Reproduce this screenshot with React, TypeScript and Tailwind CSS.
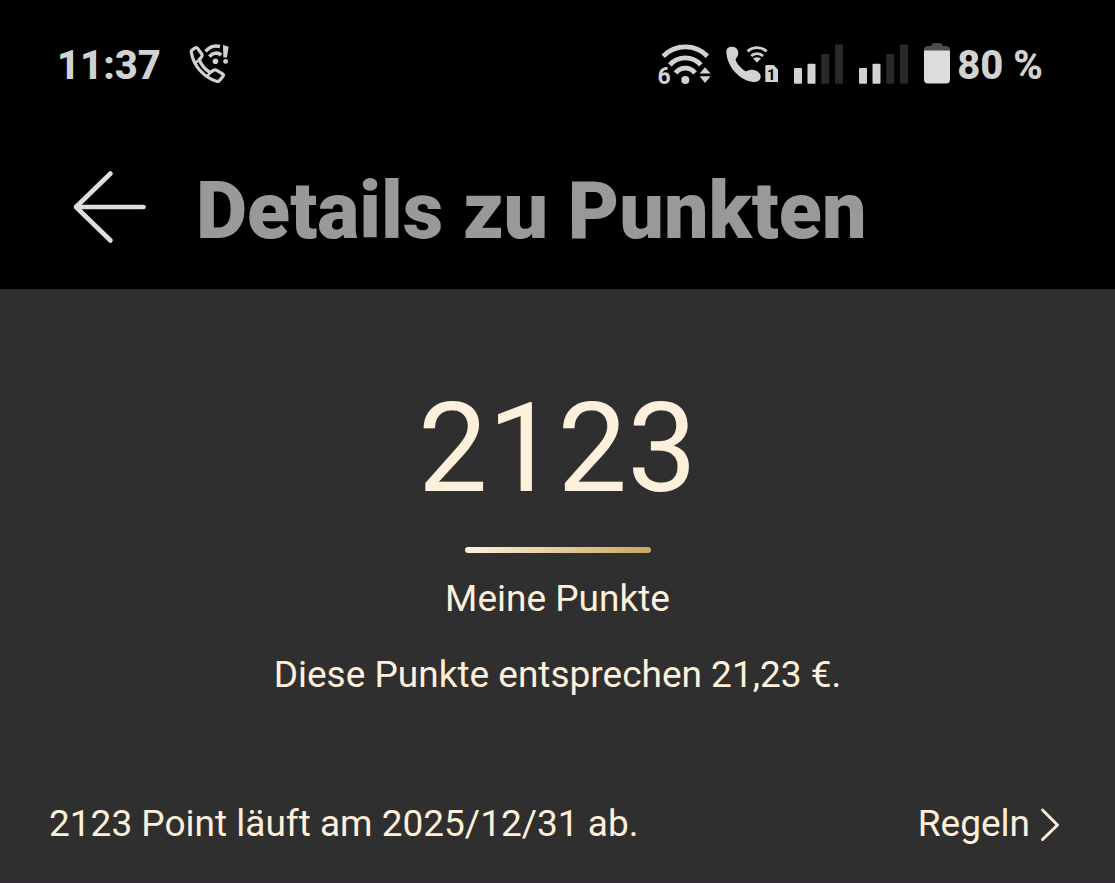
import React from 'react';

function CallWifiAlertIcon() {
  return (
    <svg width="40" height="40" viewBox="0 0 40 40" fill="none" stroke="currentColor" strokeLinecap="round" strokeLinejoin="round" aria-hidden="true">
      <path
        d="M2.3 8.2C2 7 2.6 6.2 3.6 5.6L6.2 3.9C7.2 3.3 8 3.5 8.6 4.4L12.9 10.2C13.5 11 13.5 11.8 12.9 12.5L10.2 15.6C12 20.5 16.5 25.5 21 28.6L24.8 26.2C25.7 25.6 26.5 25.6 27.3 26.2L33.6 29.8C34.6 30.4 34.8 31.3 34 32.2L30.6 36.4C29.8 37.4 28.8 37.7 27.6 37.3C15 33.5 4.5 22 2.3 8.2Z"
        strokeWidth="3.2"
      />
      <path d="M10.4 15.8L7.4 18M21 28.8L19 31.4" strokeWidth="2.6" />
      <path d="M16.6 7.4C20.6 2.6 26 1.2 31 2.6M20.4 12.6C23.5 8.6 28.6 8 32.2 11" strokeWidth="3.6" strokeLinecap="butt" />
      <circle cx="26.4" cy="17.2" r="2.8" fill="currentColor" stroke="none" />
      <path d="M34 1L39.6 2.8L38 13.4H34.4Z" fill="currentColor" stroke="none" />
      <circle cx="36.6" cy="17.4" r="2.4" fill="currentColor" stroke="none" />
    </svg>
  );
}

function WifiSixIcon() {
  return (
    <svg width="54" height="52" viewBox="-2 -4 54 52" fill="none" stroke="currentColor" strokeWidth="4.8" aria-hidden="true">
      <path d="M4.2 14.2A31 31 0 0 1 48.4 14.2" />
      <path d="M10.8 22.8A21 21 0 0 1 41.8 22.8" />
      <path d="M16.6 31A12 12 0 0 1 36 31" />
      <circle cx="26.3" cy="38" r="4" fill="currentColor" stroke="none" />
      <path d="M40.6 31.6L46 25.3L51.6 31.6ZM40.6 34.2L46 41L51.6 34.2Z" fill="currentColor" stroke="none" />
      <text x="-1.5" y="42" fontSize="23" fontWeight="700" fill="currentColor" stroke="none">6</text>
    </svg>
  );
}

function WifiCallIcon() {
  return (
    <svg width="53" height="40" viewBox="0 0 53 40" fill="none" stroke="currentColor" strokeWidth="2.8" aria-hidden="true">
      <path
        d="M0.3 8C0.3 4 3 2.7 6 2.7C10.5 2.7 12.3 6 12.3 9.3C12.3 12.3 10.4 13.5 9.5 15.5C10.5 19.5 15.5 25 19.5 27.3C21.5 26.8 23 25.5 26 25.7C31 26 34.7 29 34.7 32.5C34.7 36.5 31 38.3 27 38C14 36.5 1 23 0.3 8Z"
        fill="currentColor"
        stroke="none"
      />
      <path d="M21.6 7.4A14 14 0 0 1 40.6 7.4M25.2 12A8.4 8.4 0 0 1 37 12" />
      <path d="M27 14.6Q31 11.8 35 14.6L31 18.6Z" fill="currentColor" stroke="none" />
      <path d="M39.3 22.3A1.3 1.3 0 0 1 40.6 21H47.6L52 25.4V38H39.3Z" fill="currentColor" stroke="none" />
      <text x="41" y="35.5" fontSize="15" fontWeight="700" fill="#000" stroke="none">1</text>
    </svg>
  );
}

function SignalIcon() {
  return (
    <svg width="50" height="40" viewBox="0 0 50 40" fill="currentColor" aria-hidden="true">
      <rect x="0" y="24" width="8" height="15.7" rx="1" />
      <rect x="13.5" y="19.7" width="8" height="20" rx="1" />
      <rect x="27.2" y="10" width="8" height="29.7" rx="1" fill="#292929" />
      <rect x="41" y="0.4" width="8" height="39.3" rx="1" fill="#292929" />
    </svg>
  );
}

function BatteryIcon() {
  return (
    <svg width="26" height="44" viewBox="0 0 26 44" aria-hidden="true">
      <path d="M0 9V7.5Q0 4 4 4H7Q8 1 11 1H15Q18 1 19 4H22Q26 4 26 7.5V9Z" fill="#4d4d4d" />
      <path d="M0 8.4H26V37.5Q26 41.5 22 41.5H4Q0 41.5 0 37.5Z" fill="#dcdcdc" />
    </svg>
  );
}

function StatusBar() {
  return (
    <div className="flex h-[125px] items-center justify-between pt-0.5 pr-[72px] pl-[57px] text-[40px] leading-none font-extrabold text-[#d2d2d2]">
      <div className="flex items-center gap-7">
        <span className="pt-1">11:37</span>
        <CallWifiAlertIcon />
      </div>
      <div className="flex items-center gap-[15px]">
        <WifiSixIcon />
        <WifiCallIcon />
        <SignalIcon />
        <SignalIcon />
        <div className="flex items-center gap-[7px]">
          <BatteryIcon />
          <span className="pt-1">80 %</span>
        </div>
      </div>
    </div>
  );
}

function Header() {
  return (
    <header className="flex h-[164px] items-center gap-12 px-[72px]">
      <button type="button" aria-label="Zurück" className="text-[#dedede]">
        <svg width="76" height="76" viewBox="0 0 76 76" fill="none" stroke="currentColor" strokeWidth="4.6" strokeLinecap="round" strokeLinejoin="round" aria-hidden="true">
          <path d="M38.5 4.5L4 38L38.5 71.5M4 38H71.5" />
        </svg>
      </button>
      <h1 className="pt-2 text-[79px] leading-none font-black text-[#999999]">Details zu Punkten</h1>
    </header>
  );
}

export default function App() {
  return (
    <div className="flex min-h-screen flex-col bg-black font-[Roboto,sans-serif]">
      <StatusBar />
      <Header />
      <main className="flex grow flex-col border-b border-[#332b33] bg-[#2f2f2f] text-[37px] leading-[44px] text-[#fff0dc]">
        <section className="flex flex-col items-center pt-[98px]">
          <p className="text-[124px] leading-[124px]">2123</p>
          <div className="mt-9 h-[6px] w-[186px] rounded-full bg-linear-to-r from-[#fff0dc] to-[#c9a85c]" />
          <p className="mt-6">Meine Punkte</p>
          <p className="mt-8">Diese Punkte entsprechen 21,23 €.</p>
        </section>
        <div className="mt-[105px] flex items-center justify-between pr-[53px] pb-8 pl-[49px]">
          <p>2123 Point läuft am 2025/12/31 ab.</p>
          <a href="#regeln" className="flex items-center gap-2">
            Regeln
            <svg width="24" height="36" viewBox="0 0 24 36" fill="none" stroke="currentColor" strokeWidth="3" strokeLinecap="round" strokeLinejoin="round" aria-hidden="true">
              <path d="M4.5 4L19.5 19L4.5 33.5" />
            </svg>
          </a>
        </div>
      </main>
    </div>
  );
}
